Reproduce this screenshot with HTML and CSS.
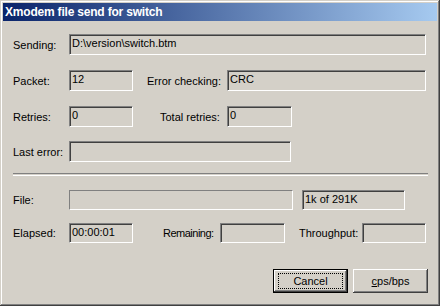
FILE: index.html
```html
<!DOCTYPE html>
<html lang="en">
<head>
    <meta charset="UTF-8">
    <title>Xmodem file send for switch</title>
    <link rel="stylesheet" href="styles.css">
</head>
<body>
    <div class="window">
        <div class="titlebar">Xmodem file send for switch</div>
        <div class="content">
            <div class="row row-sending">
                <span class="label">Sending:</span>
                <span class="field w-sending">D:\version\switch.btm</span>
            </div>
            <div class="row row-packet">
                <span class="label">Packet:</span>
                <span class="field w-small">12</span>
                <span class="label label-errchk">Error checking:</span>
                <span class="field w-errchk">CRC</span>
            </div>
            <div class="row row-retries">
                <span class="label">Retries:</span>
                <span class="field w-small">0</span>
                <span class="label label-total">Total retries:</span>
                <span class="field w-total">0</span>
            </div>
            <div class="row row-lasterr">
                <span class="label">Last error:</span>
                <span class="field w-lasterr"></span>
            </div>

            <div class="separator"></div>

            <div class="row row-file">
                <span class="label">File:</span>
                <span class="progress"></span>
                <span class="field w-size">1k of 291K</span>
            </div>
            <div class="row row-time">
                <span class="label">Elapsed:</span>
                <span class="field w-small">00:00:01</span>
                <span class="label label-remain">Remaining:</span>
                <span class="field w-remain"></span>
                <span class="label label-thru">Throughput:</span>
                <span class="field w-thru"></span>
            </div>

            <div class="buttons">
                <button type="button" class="btn btn-default"><span class="focus">Cancel</span></button>
                <button type="button" class="btn"><span class="caption"><u>c</u>ps/bps</span></button>
            </div>
        </div>
    </div>
</body>
</html>
```

FILE: styles.css
```css
body {
    margin: 0;
    background: #d4d0c8;
    font-family: "Liberation Sans", Arial, sans-serif;
    font-size: 11px;
    color: #000;
}
.window {
    width: 440px;
    height: 306px;
    box-sizing: border-box;
    padding: 3px;
    background: #d4d0c8;
    box-shadow: inset -1px -1px #404040, inset 1px 1px #d4d0c8,
                inset -2px -2px #808080, inset 2px 2px #fff;
}
.titlebar {
    height: 18px;
    line-height: 18px;
    padding-left: 2px;
    background: linear-gradient(to right, #0a246a, #a6caf0);
    color: #fff;
    font-size: 12px;
    font-weight: bold;
    letter-spacing: -0.2px;
}
.content {
    display: flex;
    flex-direction: column;
    padding-left: 10px;
}
.row {
    display: flex;
    align-items: center;
}
.row-sending { margin-top: 13px; }
.row-packet { margin-top: 15px; }
.row-retries { margin-top: 15px; }
.row-lasterr { margin-top: 14px; }
.row-file { margin-top: 14px; }
.row-time { margin-top: 13px; }

.label {
    width: 56px;
    white-space: nowrap;
}
.label-errchk { margin-left: 14px; width: 80px; }
.label-total { margin-left: 27px; width: 67px; }
.label-remain { margin-left: 30px; width: 57px; letter-spacing: -0.5px; }
.label-thru { margin-left: 14px; width: 63px; }

.field {
    height: 21px;
    box-sizing: border-box;
    line-height: 17px;
    padding-left: 2px;
    border: 1px solid;
    border-color: #808080 #fff #fff #808080;
    box-shadow: inset 1px 1px #404040, inset -1px -1px #d4d0c8;
    background: #d4d0c8;
    white-space: nowrap;
    overflow: hidden;
}
.row-file .field,
.row-time .field { height: 20px; line-height: 16px; }

.w-sending { width: 357px; }
.w-small { width: 64px; }
.w-errchk { width: 199px; }
.w-total { width: 65px; }
.w-lasterr { width: 222px; }
.w-size { width: 103px; margin-left: 9px; }
.w-remain { width: 65px; }
.w-thru { width: 64px; }

.progress {
    width: 224px;
    height: 20px;
    box-sizing: border-box;
    border: 1px solid;
    border-color: #808080 #fff #fff #808080;
}

.separator {
    width: 415px;
    height: 1px;
    margin-top: 11px;
    border-top: 1px solid #808080;
    border-bottom: 1px solid #fff;
    align-self: flex-start;
}

.buttons {
    display: flex;
    justify-content: flex-end;
    gap: 5px;
    margin-top: 26px;
    padding-right: 9px;
}
.btn {
    width: 75px;
    height: 24px;
    padding: 0;
    font-family: inherit;
    font-size: 11px;
    color: #000;
    background: #d4d0c8;
    border: none;
    box-shadow: inset -1px -1px #404040, inset 1px 1px #fff,
                inset -2px -2px #808080, inset 2px 2px #d4d0c8;
    display: flex;
    align-items: center;
    justify-content: center;
}
.btn-default {
    border: 1px solid #000;
}
.focus {
    width: 63px;
    height: 14px;
    line-height: 14px;
    border: 1px dotted #000;
    text-align: center;
}
.caption {
    line-height: 14px;
}
```
